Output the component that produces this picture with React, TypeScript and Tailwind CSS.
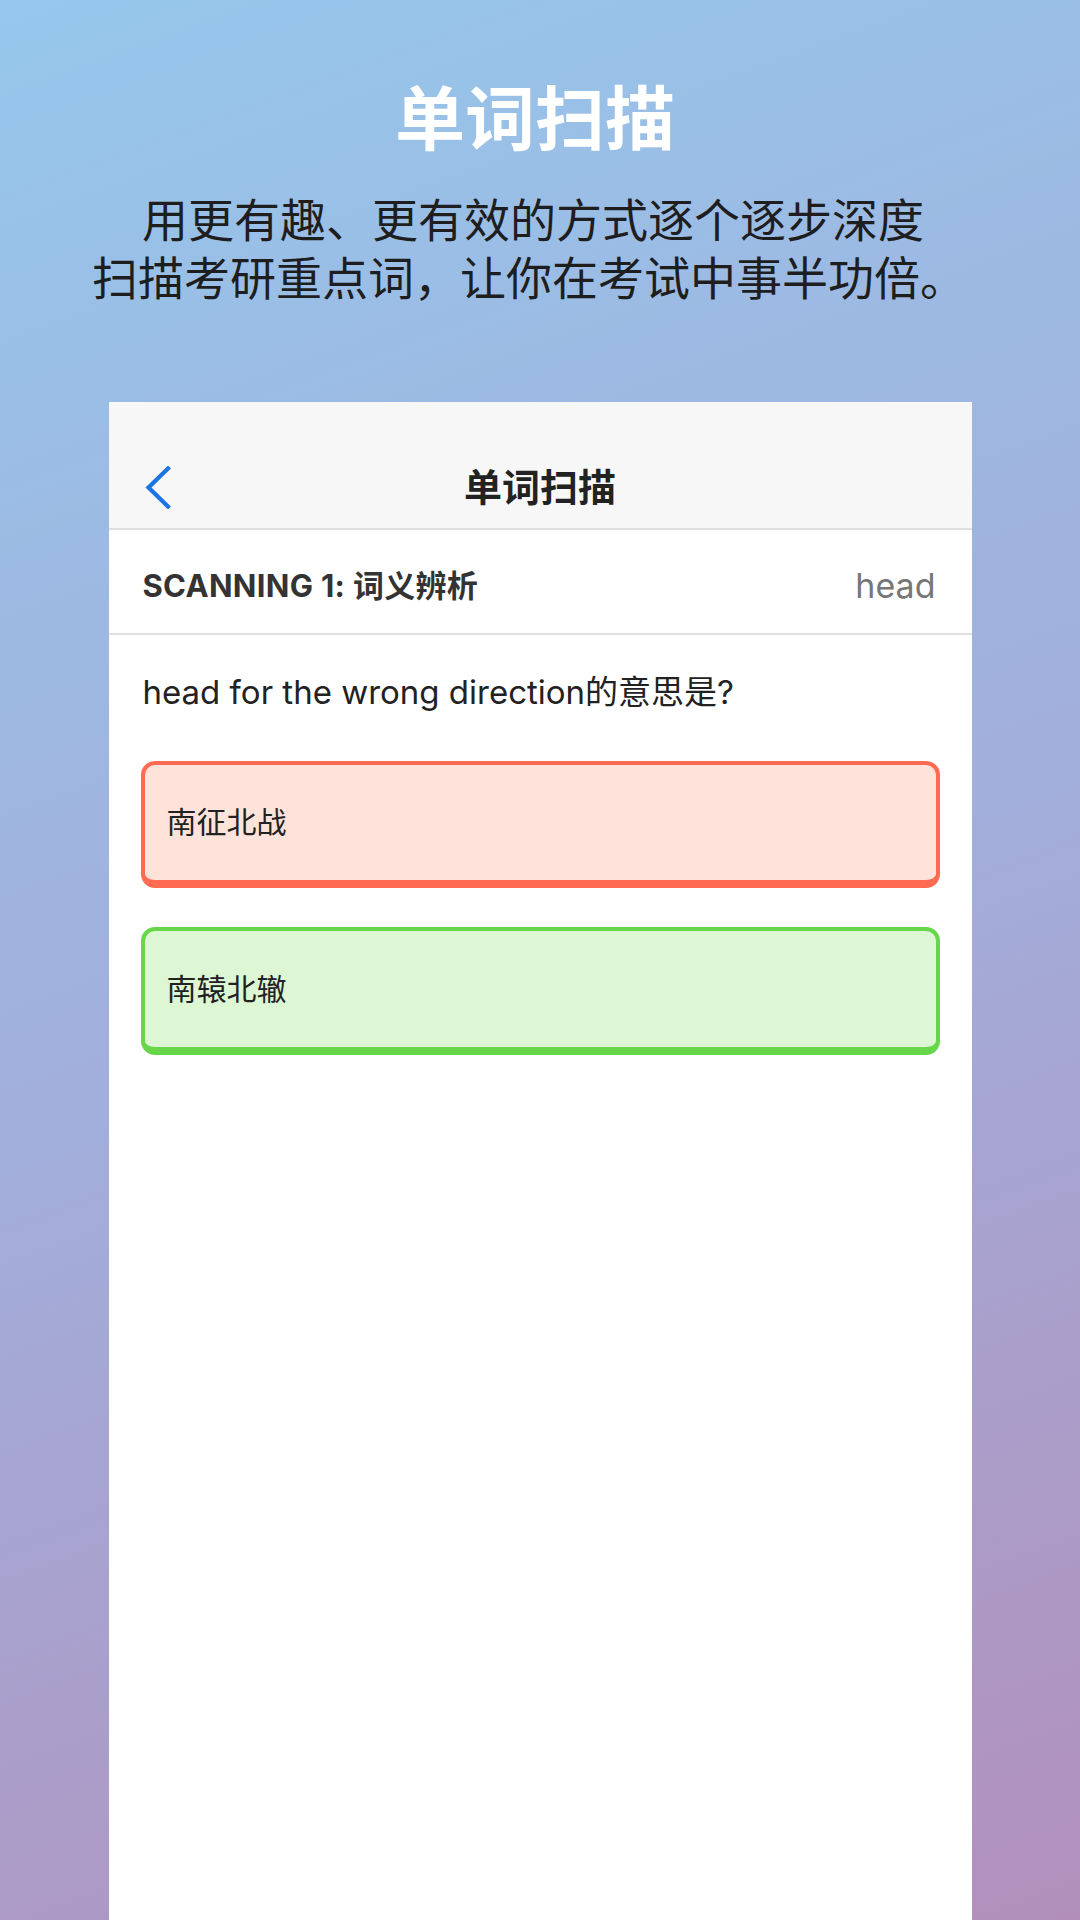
import React from "react";

const FONT = { fontFamily: 'Inter, "Noto Sans CJK SC", sans-serif' };

export default function App() {
  return (
    <div
      className="w-[1080px] h-[1920px] overflow-hidden flex flex-col items-center bg-[linear-gradient(160deg,#96c7ec_0%,#a2aedb_50%,#b28fbb_100%)]"
      style={FONT}
    >
      <h1 className="mt-[85px] pr-[10px] text-[70px] leading-[70px] font-bold text-white">单词扫描</h1>
      <div className="mt-[36px] flex flex-col items-center text-[46px] leading-[58px] text-[#1e1e1e]">
        <p className="pr-[14px]">用更有趣、更有效的方式逐个逐步深度</p>
        <p className="pr-[22px]">扫描考研重点词，让你在考试中事半功倍。</p>
      </div>

      <div className="mt-[95px] w-[863px] flex-1 bg-white flex flex-col">
        <div className="h-[128px] bg-[#f7f7f7] border-b-2 border-[#e0e0e0] relative flex items-center justify-center pt-[44px]">
          <svg
            className="absolute left-[36px] top-[64px]"
            width="26"
            height="43"
            viewBox="0 0 26 43"
            fill="none"
          >
            <path d="M23 2.5 L3.5 21.5 L23 40.5" stroke="#1a74e2" strokeWidth="4.2" strokeLinecap="square" strokeLinejoin="miter" />
          </svg>
          <span className="text-[38px] leading-[42px] font-bold text-[#222]">单词扫描</span>
        </div>

        <div className="h-[105px] border-b-2 border-[#e0e0e0] flex items-center justify-between pl-[34px] pr-[36px] pt-[10px]">
          <span className="text-[31px] font-bold text-[#333] tracking-[0.3px]">SCANNING 1: 词义辨析</span>
          <span className="text-[34px] text-[#777] -mt-[2px]">head</span>
        </div>

        <p className="pt-[38px] pl-[34px] text-[33px] leading-[38px] text-[#222]">
          head for the wrong direction的意思是?
        </p>

        <div className="mt-[50px] mx-[32px] flex flex-col gap-[39px]">
          <div className="h-[127px] rounded-[14px] border-4 border-b-8 border-[#ff6a52] bg-[#ffe3da] flex items-center pl-[22px]">
            <span className="text-[30px] text-[#222]">南征北战</span>
          </div>
          <div className="h-[128px] rounded-[14px] border-4 border-b-8 border-[#68d64a] bg-[#ddf6d4] flex items-center pl-[22px]">
            <span className="text-[30px] text-[#222]">南辕北辙</span>
          </div>
        </div>
      </div>
    </div>
  );
}
